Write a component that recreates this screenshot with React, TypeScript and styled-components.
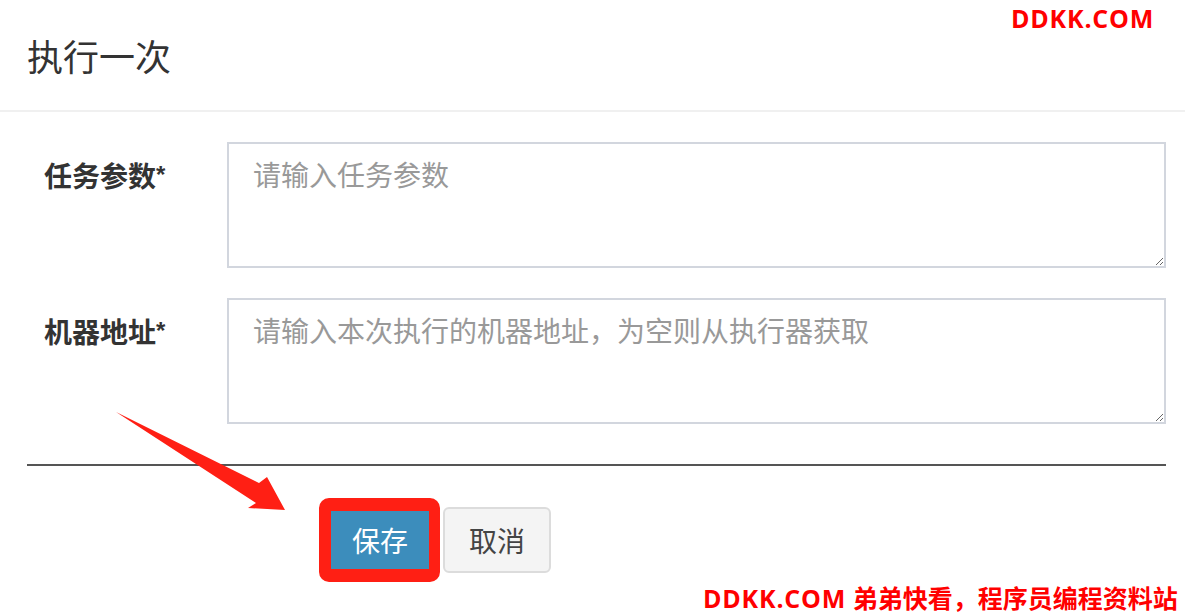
import React from "react"
import styled, { createGlobalStyle } from "styled-components"

const GlobalStyle = createGlobalStyle`
  html, body {
    margin: 0;
    padding: 0;
    background: #fff;
  }
  body {
    font-family: "Noto Sans CJK SC", "Noto Sans", sans-serif;
    color: #333;
  }
  * {
    box-sizing: border-box;
  }
`

interface FieldProps {
  label: string
  placeholder: string
}

const Field: React.FC<FieldProps> = ({ label, placeholder }) => (
  <S.Row>
    <S.Label>
      {label}
      <S.Star>*</S.Star>
    </S.Label>
    <S.TextArea placeholder={placeholder} />
  </S.Row>
)

const Arrow = () => (
  <S.Overlay width="1185" height="614" viewBox="0 0 1185 614">
    <polygon
      points="116,412 259,483 267,477 285,510 248,508 256,503"
      fill="#ff1f14"
    />
  </S.Overlay>
)

export default function App() {
  return (
    <>
      <GlobalStyle />
      <S.Page>
        <S.Header>
          <S.Title>执行一次</S.Title>
        </S.Header>
        <S.Body>
          <S.Form>
            <Field label="任务参数" placeholder="请输入任务参数" />
            <Field label="机器地址" placeholder="请输入本次执行的机器地址，为空则从执行器获取" />
          </S.Form>
          <S.Divider />
          <S.Footer>
            <S.Highlight>
              <S.Button primary>保存</S.Button>
            </S.Highlight>
            <S.Button>取消</S.Button>
          </S.Footer>
        </S.Body>
        <Arrow />
        <S.MarkTop>
          <S.Latin>DDKK.COM</S.Latin>
        </S.MarkTop>
        <S.MarkBottom>
          <S.Latin>DDKK.COM</S.Latin> 弟弟快看，程序员编程资料站
        </S.MarkBottom>
      </S.Page>
    </>
  )
}

const S = {
  Page: styled.div`
    position: relative;
    width: 1185px;
    height: 614px;
    overflow: hidden;
    background: #fff;
  `,
  Header: styled.div`
    display: flex;
    align-items: center;
    height: 112px;
    padding: 2px 0 0 27px;
    border-bottom: 2px solid #f0f0f0;
  `,
  Title: styled.h4`
    margin: 0;
    font-size: 36px;
    font-weight: 400;
    line-height: 1.2;
    color: #333;
  `,
  Body: styled.div`
    padding: 30px 19px 0 27px;
  `,
  Form: styled.div`
    display: flex;
    flex-direction: column;
    gap: 30px;
  `,
  Row: styled.div`
    display: grid;
    grid-template-columns: 200px 1fr;
  `,
  Label: styled.label`
    padding: 13px 0 0 17px;
    font-size: 28px;
    line-height: 40px;
    font-weight: 700;
    color: #333;
  `,
  Star: styled.span`
    font-size: 24px;
    font-family: "Liberation Sans", sans-serif;
    vertical-align: top;
  `,
  TextArea: styled.textarea`
    display: block;
    width: 100%;
    height: 126px;
    margin: 0;
    padding: 10px 24px;
    border: 2px solid #d2d6de;
    border-radius: 0;
    font-family: "Noto Sans CJK SC", "Noto Sans", sans-serif;
    font-size: 28px;
    line-height: 40px;
    color: #555;
    resize: vertical;
    outline: none;

    &::placeholder {
      color: #999;
    }
  `,
  Divider: styled.div`
    margin-top: 40px;
    height: 2px;
    background: #555;
  `,
  Footer: styled.div`
    display: flex;
    align-items: center;
    gap: 3px;
    padding: 32px 0 0 292px;
  `,
  Highlight: styled.div`
    display: flex;
    border-style: solid;
    border-color: #ff1f14;
    border-width: 13px 11px 13px 12px;
    border-radius: 10px;
  `,
  Button: styled.button<{ primary?: boolean }>`
    display: flex;
    align-items: center;
    justify-content: center;
    width: ${({ primary }) => (primary ? "98px" : "108px")};
    height: ${({ primary }) => (primary ? "58px" : "66px")};
    margin: 0;
    padding: 0;
    border: ${({ primary }) => (primary ? "none" : "2px solid #dcdcdc")};
    border-radius: ${({ primary }) => (primary ? "0" : "6px")};
    background: ${({ primary }) => (primary ? "#3c8dbc" : "#f4f4f4")};
    color: ${({ primary }) => (primary ? "#fff" : "#444")};
    font-family: "Noto Sans CJK SC", "Noto Sans", sans-serif;
    font-size: 28px;
    line-height: 1;
  `,
  Overlay: styled.svg`
    position: absolute;
    left: 0;
    top: 0;
    pointer-events: none;
  `,
  Latin: styled.span`
    letter-spacing: 0.8px;
  `,
  MarkTop: styled.div`
    position: absolute;
    top: 2px;
    left: 1011px;
    font-family: "Open Sans", "Noto Sans CJK SC", sans-serif;
    font-size: 25px;
    font-weight: 700;
    line-height: 32px;
    color: #ff0000;
  `,
  MarkBottom: styled.div`
    position: absolute;
    top: 583px;
    left: 703px;
    font-family: "Open Sans", "Noto Sans CJK SC", sans-serif;
    font-size: 25px;
    font-weight: 700;
    line-height: 30px;
    color: #ff0000;
    white-space: nowrap;
  `,
}
